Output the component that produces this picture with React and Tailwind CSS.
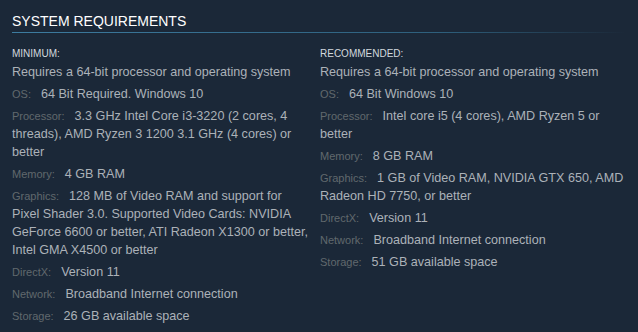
import React from 'react';

const minimum = [
  { label: null, value: 'Requires a 64-bit processor and operating system' },
  { label: 'OS:', value: '64 Bit Required. Windows 10' },
  { label: 'Processor:', value: '3.3 GHz Intel Core i3-3220 (2 cores, 4 threads), AMD Ryzen 3 1200 3.1 GHz (4 cores) or better' },
  { label: 'Memory:', value: '4 GB RAM' },
  { label: 'Graphics:', value: '128 MB of Video RAM and support for Pixel Shader 3.0. Supported Video Cards: NVIDIA GeForce 6600 or better, ATI Radeon X1300 or better, Intel GMA X4500 or better' },
  { label: 'DirectX:', value: 'Version 11' },
  { label: 'Network:', value: 'Broadband Internet connection' },
  { label: 'Storage:', value: '26 GB available space' },
];

const recommended = [
  { label: null, value: 'Requires a 64-bit processor and operating system' },
  { label: 'OS:', value: '64 Bit Windows 10' },
  { label: 'Processor:', value: 'Intel core i5 (4 cores), AMD Ryzen 5 or better' },
  { label: 'Memory:', value: '8 GB RAM' },
  { label: 'Graphics:', value: '1 GB of Video RAM, NVIDIA GTX 650, AMD Radeon HD 7750, or better' },
  { label: 'DirectX:', value: 'Version 11' },
  { label: 'Network:', value: 'Broadband Internet connection' },
  { label: 'Storage:', value: '51 GB available space' },
];

const ReqColumn = ({ title, items, className }) => (
  <div className={className}>
    <div className="text-[10px] leading-[18px] uppercase text-[#d2d9df]">{title}</div>
    <ul>
      {items.map((item, i) => (
        <li
          key={i}
          className={`text-[12.6px] leading-[18px] text-[#acb2b8] mb-[2px] ${item.label ? 'pt-[2px]' : ''}`}
        >
          {item.label && (
            <span className="text-[11px] text-[#61686d] mr-[10px]">{item.label}</span>
          )}
          {item.value}
        </li>
      ))}
    </ul>
  </div>
);

export default function App() {
  return (
    <div
      className="w-[638px] h-[332px] bg-[#1b2838] pl-[12px] overflow-hidden"
      style={{ fontFamily: '"Liberation Sans", Arial, sans-serif' }}
    >
      <div className="pt-[11px] pb-[1px] text-[14px] leading-[20px] text-white uppercase">
        System Requirements
      </div>
      <div className="h-px w-[614px] bg-gradient-to-r from-[#3d7ca0] via-[#2e5f7c] via-70% to-transparent" />
      <div className="flex mt-[12px]">
        <ReqColumn title="Minimum:" items={minimum} className="w-[300px] mr-[8px]" />
        <ReqColumn title="Recommended:" items={recommended} className="w-[310px]" />
      </div>
    </div>
  );
}
